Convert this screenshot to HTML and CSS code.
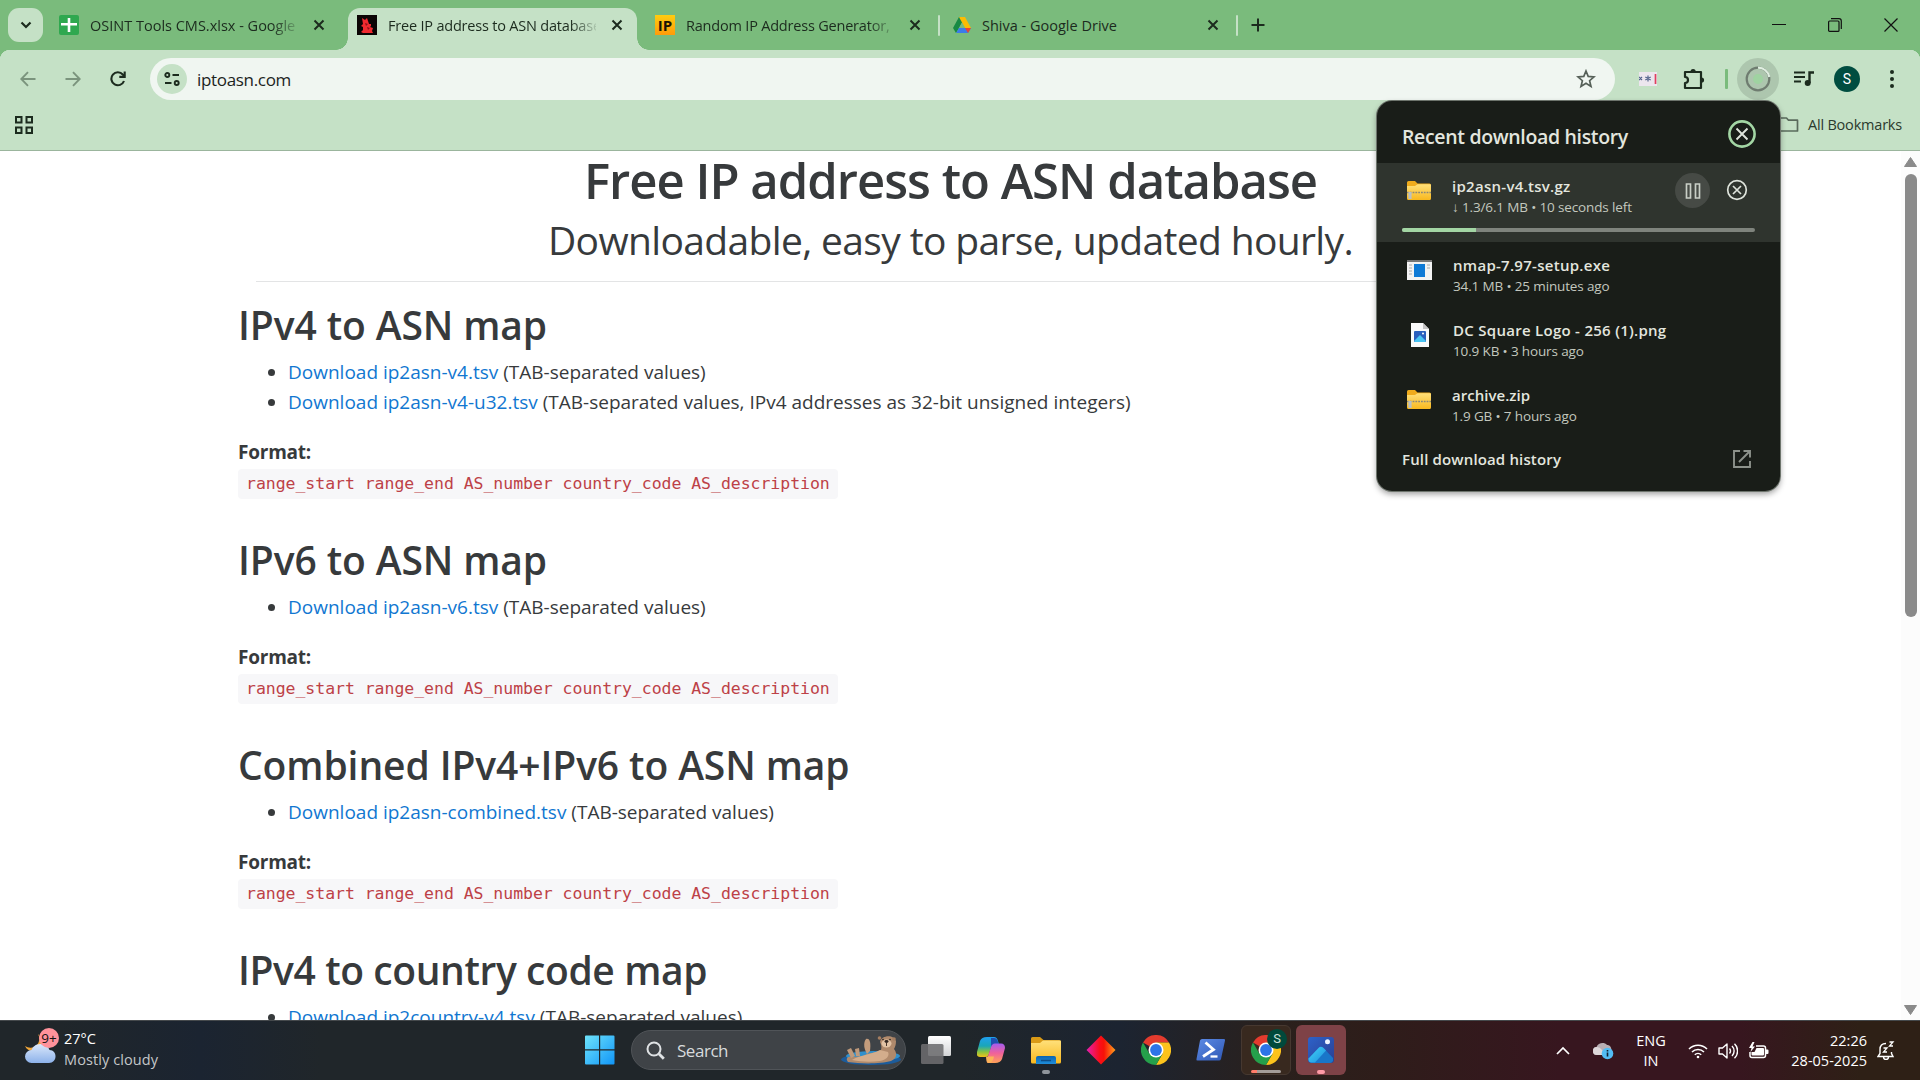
FILE: index.html
```html
<!DOCTYPE html>
<html lang="en">
<head>
<meta charset="utf-8">
<title>Free IP address to ASN database</title>
<link rel="stylesheet" href="styles.css">
</head>
<body>
<svg class="defs" width="0" height="0" aria-hidden="true">
  <defs>
    <linearGradient id="win" gradientUnits="userSpaceOnUse" x1="0" y1="0" x2="30" y2="30"><stop offset="0" stop-color="#6fe4fb"/><stop offset="1" stop-color="#0f94f7"/></linearGradient>
    <linearGradient id="folder" x1="0" y1="0" x2="0" y2="1"><stop offset="0" stop-color="#ffe07a"/><stop offset="1" stop-color="#f8b81e"/></linearGradient>
    <linearGradient id="blueTab" x1="0" y1="0" x2="0" y2="1"><stop offset="0" stop-color="#0b64b0"/><stop offset="1" stop-color="#1f8edb"/></linearGradient>
    <linearGradient id="cloud" x1="0" y1="0" x2="0" y2="1"><stop offset="0" stop-color="#dbe8fb"/><stop offset="1" stop-color="#8db2ea"/></linearGradient>
    <linearGradient id="gem"><stop offset="0" stop-color="#e51fb0"/><stop offset=".45" stop-color="#fb0d1b"/><stop offset=".6" stop-color="#f71208"/><stop offset="1" stop-color="#ffa11c"/></linearGradient>
    <linearGradient id="copA" x1="0" y1="0" x2="0" y2="1"><stop offset="0" stop-color="#1f9ff0"/><stop offset=".45" stop-color="#1aa6b8"/><stop offset=".75" stop-color="#8ac43f"/><stop offset="1" stop-color="#f2c21a"/></linearGradient>
    <linearGradient id="copB" x1="0" y1="0" x2="0" y2="1"><stop offset="0" stop-color="#a35cf0"/><stop offset=".5" stop-color="#f0629a"/><stop offset="1" stop-color="#ffa257"/></linearGradient>
    <linearGradient id="view" x1="0" y1="0" x2="0" y2="1"><stop offset="0" stop-color="#fff"/><stop offset="1" stop-color="#d2d3d5"/></linearGradient>
    <linearGradient id="sky" x1="0" y1="0" x2="1" y2="1"><stop offset="0" stop-color="#2d62c9"/><stop offset="1" stop-color="#2b3f92"/></linearGradient>
    <linearGradient id="hill" x1="0" y1="0" x2="1" y2="1"><stop offset="0" stop-color="#3fd3f6"/><stop offset="1" stop-color="#1f8fdf"/></linearGradient>
    <linearGradient id="ps" x1="0" y1="0" x2="1" y2="1"><stop offset="0" stop-color="#5d8be6"/><stop offset="1" stop-color="#2f58b5"/></linearGradient>
    <symbol id="x" viewBox="0 0 12 12"><path d="M1.500 1.500l9 9M10.500 1.500l-9 9" stroke="#1c2b1e" stroke-width="2" fill="none"/></symbol>
    <symbol id="chrome" viewBox="0 0 30 30">
      <path d="M15 15L2 7.500A15 15 0 0 1 28 7.500H15z" fill="#e33b2e"/>
      <path d="M15 7.500H28A15 15 0 0 1 15 30L21.500 18.700z" fill="#fcc31c"/>
      <path d="M2 7.500A15 15 0 0 0 15 30L21.500 18.700 15 15 8.500 18.700z" fill="#25a04b"/>
      <circle cx="15" cy="15" r="7.500" fill="#fff"/><circle cx="15" cy="15" r="5.900" fill="#2d74e8"/>
    </symbol>
    <symbol id="zip" viewBox="0 0 24 19">
      <path d="M0 1.500Q0 0 1.500 0H8l2.500 2.500H22.500Q24 2.500 24 4V8H0z" fill="#efab1c"/>
      <path d="M0 5h8l2.500-1.800H23q1 0 1 1V17.500q0 1.500-1.500 1.500H1.500Q0 19 0 17.500z" fill="url(#folder)"/>
      <path d="M0 11.500H24" stroke="#8c8877" stroke-width="1.600" stroke-dasharray="1.800 1"/>
      <path d="M3 11v7" stroke="#b9bfc1" stroke-width="3.200"/>
    </symbol>
  </defs>
</svg>

<header class="tabstrip">
  <button class="tab-search"><svg width="12" height="8" viewBox="0 0 12 8"><path d="M1.500 1.500L6 6l4.500-4.500" fill="none" stroke="#1c2b1e" stroke-width="2.200"/></svg></button>
  <div class="tab">
    <svg width="20" height="20"><rect width="20" height="20" rx="2" fill="#2fa84f"/><path d="M8.700 3h2.600v5H18v2.500h-6.700V17H8.700v-6.500H2V8h6.700z" fill="#fff"/></svg>
    <span class="tab-title fade">OSINT Tools CMS.xlsx - Google</span>
    <svg class="x" width="12" height="12"><use href="#x"/></svg>
  </div>
  <div class="tab active">
    <svg width="20" height="20"><rect width="20" height="20" fill="#0c0505"/><path d="M5 3l3 2 2-2 1 3 1 3 2 0 0 2-1 1 3 1-1 3 1 2-10 0-2-1 2-2 0-3-2-1 2-2z" fill="#f02a30"/><path d="M8 8l3 1-2 2zM10 12l3 1-2 2z" fill="#8c1418"/></svg>
    <span class="tab-title fade tight">Free IP address to ASN database</span>
    <svg class="x" width="12" height="12"><use href="#x"/></svg>
  </div>
  <div class="tab sep">
    <span class="ip">IP</span>
    <span class="tab-title fade tight">Random IP Address Generator,</span>
    <svg class="x" width="12" height="12"><use href="#x"/></svg>
  </div>
  <div class="tab sep">
    <svg width="18" height="17" viewBox="0 0 18 17"><path d="M6 0h6L6 11l-3 5L0 11z" fill="#188a44"/><path d="M6 0h6l6 11h-6z" fill="#fbbc04"/><path d="M3.200 16L6 11h12l-3 5z" fill="#3b7bea"/><path d="M12 11h6l-3 5z" fill="#ea4335"/><path d="M9 5.500l3 5.500H6z" fill="#7abb7c"/></svg>
    <span class="tab-title drive">Shiva - Google Drive</span>
    <svg class="x" width="12" height="12"><use href="#x"/></svg>
  </div>
  <svg class="plus" width="14" height="14"><path d="M7 .5v13M.5 7h13" stroke="#1c2b1e" stroke-width="2"/></svg>
  <div class="win-buttons">
    <svg width="14" height="14"><path d="M0 6.500h14" stroke="#111"/></svg>
    <svg width="14" height="14" fill="none" stroke="#111" stroke-width="1.200"><rect x=".6" y="3" width="10.400" height="10.400" rx="1"/><path d="M3 .7h8q2.300 0 2.300 2.300v8"/></svg>
    <svg width="14" height="14"><path d="M.5.5l13 13M13.500.5l-13 13" stroke="#111" stroke-width="1.200"/></svg>
  </div>
</header>

<nav class="toolbar">
  <div class="nav-icons">
    <svg width="16" height="16" fill="none" stroke="#7b947d" stroke-width="1.900"><path d="M15.500 8H1.500M8 1.200L1.300 8 8 14.800"/></svg>
    <svg width="16" height="16" fill="none" stroke="#7b947d" stroke-width="1.900"><path d="M.5 8h14M8 1.200L14.700 8 8 14.800"/></svg>
    <svg width="16" height="16" fill="none" stroke="#1c2b1e" stroke-width="2.100"><path d="M14 10A6.500 6.500 0 1 1 12.800 3.500L14.500 5.500"/><path d="M14.700.5v5.400H9.300"/></svg>
  </div>
  <div class="omnibox">
    <span class="chip"><svg width="16" height="14" fill="none" stroke="#1c2b1e" stroke-width="1.900"><circle cx="3.300" cy="3" r="2"/><path d="M8.500 3H15M1 11h6.500"/><circle cx="12.700" cy="11" r="2"/></svg></span>
    <span class="url">iptoasn.com</span>
    <svg class="star" width="20" height="20" viewBox="0 0 20 20"><path d="M10 2l2.200 5.400 5.800.5-4.400 3.800 1.400 5.700L10 14.300l-5 3.100 1.400-5.700L2 7.900l5.800-.5z" fill="none" stroke="#566058" stroke-width="1.700"/></svg>
  </div>
  <svg class="ext" width="18" height="14"><rect width="18" height="14" fill="#ece6ee"/><path d="M9 3.500v6M6.300 5l5.400 3M11.700 5L6.300 8M0 5l3 3M3 5L0 8" stroke="#53648c" stroke-width="1.200"/><path d="M16.500 2v10" stroke="#e0405e" stroke-width="1.700"/></svg>
  <svg class="puzzle" width="22" height="22"><path d="M2 4H18V20H2v-5a3 3 0 0 0 0-6z" fill="none" stroke="#1c2b1e" stroke-width="2.200" stroke-linejoin="round"/><path d="M7.500 3.500a2.600 2.600 0 0 1 5.200 0zM18.500 9.400a2.600 2.600 0 0 1 0 5.200z" fill="#1c2b1e"/></svg>
  <span class="bar"></span>
  <span class="dl-btn"><svg width="26" height="26" fill="none"><circle cx="13" cy="13" r="5" fill="#9fd3a1"/><circle cx="13" cy="13" r="11.300" stroke="#6f7c70" stroke-width="2.200"/><path d="M13 1.700A11.300 11.300 0 0 1 24.300 11" stroke="#e0efe1" stroke-width="2.200"/></svg></span>
  <svg class="music" width="20" height="16"><path d="M0 1.500h11M0 6h11M0 10.500h7" stroke="#1c2b1e" stroke-width="2.200"/><path d="M15.500 12V1.500H20" fill="none" stroke="#1c2b1e" stroke-width="2.400"/><circle cx="13.700" cy="12" r="3" fill="#1c2b1e"/></svg>
  <span class="avatar">S</span>
  <svg class="dots" width="4" height="18" fill="#1c2b1e"><circle cx="2" cy="2" r="2"/><circle cx="2" cy="9" r="2"/><circle cx="2" cy="16" r="2"/></svg>
</nav>

<div class="bookmarks">
  <svg width="18" height="18" fill="none" stroke="#1c2b1e" stroke-width="2"><path d="M1 1h5.500v5.500H1zM11.500 1H17v5.500h-5.500zM1 11.500h5.500V17H1zM11.500 11.500H17V17h-5.500z"/></svg>
  <span class="all"><svg width="20" height="15" fill="none" stroke="#5a6b5c" stroke-width="1.700"><path d="M1 1h6.500l2 2.200H18.500V14H1z" stroke-linejoin="round"/></svg>All Bookmarks</span>
</div>

<div class="viewport">
  <main class="page">
    <h1>Free IP address to ASN database</h1>
    <p class="lead">Downloadable, easy to parse, updated hourly.</p>
    <hr>
    <section>
      <h2>IPv4 to ASN map</h2>
      <ul>
        <li><a>Download ip2asn-v4.tsv</a> (TAB-separated values)</li>
        <li><a>Download ip2asn-v4-u32.tsv</a> (TAB-separated values, IPv4 addresses as 32-bit unsigned integers)</li>
      </ul>
      <div class="format"><b>Format:</b><code>range_start range_end AS_number country_code AS_description</code></div>
    </section>
    <section>
      <h2>IPv6 to ASN map</h2>
      <ul><li><a>Download ip2asn-v6.tsv</a> (TAB-separated values)</li></ul>
      <div class="format"><b>Format:</b><code>range_start range_end AS_number country_code AS_description</code></div>
    </section>
    <section>
      <h2>Combined IPv4+IPv6 to ASN map</h2>
      <ul><li><a>Download ip2asn-combined.tsv</a> (TAB-separated values)</li></ul>
      <div class="format"><b>Format:</b><code>range_start range_end AS_number country_code AS_description</code></div>
    </section>
    <section>
      <h2 class="narrow">IPv4 to country code map</h2>
      <ul><li><a>Download ip2country-v4.tsv</a> (TAB-separated values)</li></ul>
    </section>
  </main>
  <aside class="scrollbar">
    <svg width="13" height="10"><path d="M6.500.5L12.500 9.500H.5z" fill="#8a8a8a" stroke="#8a8a8a" stroke-linejoin="round"/></svg>
    <span class="thumb"></span>
    <svg width="13" height="10"><path d="M6.500 9.500L12.500.5H.5z" fill="#8a8a8a" stroke="#8a8a8a" stroke-linejoin="round"/></svg>
  </aside>
</div>

<div class="popup">
  <div class="popup-head"><span>Recent download history</span>
    <svg width="28" height="28" fill="none"><circle cx="14" cy="14" r="12.600" stroke="#a3d6a4" stroke-width="2.600"/><path d="M8.500 8.500l11 11M19.500 8.500l-11 11" stroke="#dfe4dc" stroke-width="1.900"/></svg>
  </div>
  <div class="item current">
    <svg class="file" width="24" height="19"><use href="#zip"/></svg>
    <div class="names"><b>ip2asn-v4.tsv.gz</b><small>↓ 1.3/6.1 MB • 10 seconds left</small></div>
    <span class="pause"><svg width="16" height="16" fill="none" stroke="#c9cec6" stroke-width="1.700"><path d="M1.500 1h4v14h-4zM10.500 1h4v14h-4z"/></svg></span>
    <svg class="cancel" width="22" height="22" fill="none" stroke="#dfe4dc" stroke-width="1.700"><circle cx="11" cy="11" r="9.300"/><path d="M7 7l8 8M15 7l-8 8"/></svg>
    <div class="progress"><i></i></div>
  </div>
  <div class="item">
    <svg class="file" width="25" height="20"><rect width="25" height="20" fill="#f3f3f3"/><rect width="25" height="2" fill="#777"/><path d="M2 5h3M2 8h3M2 11h3M2 14h3M20 5h3M20 8h3" stroke="#aaa"/><rect x="7" y="4" width="11" height="13" fill="#0f7ad6"/></svg>
    <div class="names"><b>nmap-7.97-setup.exe</b><small>34.1 MB • 25 minutes ago</small></div>
  </div>
  <div class="item">
    <svg class="file page-file" width="18" height="24"><path d="M0 0h12l6 6v18H0z" fill="#fafafa"/><path d="M12 0l6 6h-6z" fill="#c4c4c4"/><rect x="3" y="8" width="12" height="11" rx="1" fill="#2a5fbe"/><path d="M3 18l6-6 6 6-1 1H4z" fill="#49c4f2"/><circle cx="12" cy="10.500" r="1" fill="#fff"/></svg>
    <div class="names"><b>DC Square Logo - 256 (1).png</b><small>10.9 KB • 3 hours ago</small></div>
  </div>
  <div class="item">
    <svg class="file" width="24" height="19"><use href="#zip"/></svg>
    <div class="names"><b class="zip-name">archive.zip</b><small>1.9 GB • 7 hours ago</small></div>
  </div>
  <div class="popup-foot"><b>Full download history</b>
    <svg width="20" height="20" fill="none" stroke="#8d928b" stroke-width="1.900"><path d="M8 2H2v16h16v-6M11.500 2H18v6.500M18 2L7 13"/></svg>
  </div>
</div>

<footer class="taskbar">
  <div class="weather">
    <svg width="36" height="38" viewBox="0 0 36 38"><path d="M14 6a9 9 0 0 1-13 12c3 7 14 7 16-2 .700-4-.5-8-3-10z" fill="#f3a83a"/><path d="M7.500 35a6.500 6.500 0 0 1 0-13c1-3 4-6 9-6s8 3 9 6c4 0 6 3 6 6.500S29 35 25 35z" fill="url(#cloud)"/><circle cx="25" cy="10" r="10" fill="#ff929b"/><text x="25" y="15" text-anchor="middle" class="badge-text">9+</text></svg>
    <div class="weather-text"><span>27°C</span><span class="dim">Mostly cloudy</span></div>
  </div>
  <div class="apps">
    <span class="app"><svg width="30" height="30" fill="url(#win)"><path d="M0 1.500Q0 .5 1 .5H14v13.800H0zM15.200.5H28.500q1 0 1 1V14.300H15.200zM0 15.500H14V29.500H1q-1 0-1-1zM15.200 15.500H29.500V28.500q0 1-1 1H15.200z"/></svg></span>
    <div class="search">
      <svg width="19" height="19" fill="none" stroke="#dfe2e4" stroke-width="2"><circle cx="8" cy="8" r="6.500"/><path d="M12.800 12.800l5 5" stroke-width="2.800"/></svg>
      <span>Search</span>
      <svg class="otter" width="62" height="32" viewBox="0 0 62 32">
        <ellipse cx="31" cy="25.500" rx="30" ry="5.500" fill="#1c5c9c"/><ellipse cx="33" cy="22" rx="27" ry="5" fill="#3090cc"/>
        <path d="M8 28c-3-4 0-6 5-5l10-1c6-4 14-3 18-6 1-3 0-6-1-8 1-7 14-8 16-1 0 4-1 6-2 8 4 5 2 10-3 12-10 3-30 3-43 1z" fill="#b08a6c"/>
        <path d="M12 26c8-5 18-5 28-10l8 2c2 4-2 8-8 9-9 1-18 1-28-1z" fill="#d3ad8c"/>
        <path d="M27 20c-3-5-4-11-1-15 4-1 5 4 4 12z" fill="#c39c7c"/><path d="M11 24l-4-8 4-2 4 8M16 22l-1-7 4-1 1 8" fill="#c09a7b"/>
        <circle cx="39.500" cy="4" r="1.800" fill="#a57e61"/><circle cx="54" cy="5" r="1.800" fill="#a57e61"/>
        <ellipse cx="46.500" cy="9.500" rx="5" ry="4" fill="#e2c3a5"/><ellipse cx="46.500" cy="7.500" rx="2" ry="1.400" fill="#332620"/><circle cx="43" cy="5.500" r=".8" fill="#222"/><circle cx="50" cy="5.500" r=".8" fill="#222"/><path d="M46.500 9v3" stroke="#4a3429"/>
      </svg>
    </div>
    <span class="app"><svg width="30" height="28"><rect x="7" width="23" height="20" rx="1.500" fill="url(#view)"/><rect y="8" width="22.500" height="20" rx="1.500" fill="#6d6d6f" opacity=".88"/></svg></span>
    <span class="app"><svg width="28" height="26" viewBox="0 0 28 26"><path d="M10 0h7q3 0 4 4l.8 2.500H18q-3 0-4 4l-2 6.500q-1 3-4 3H3q-4 0-3-5l3-11q1.500-4 7-4z" fill="url(#copA)"/><path d="M14 1h3q3 0 4 4l.8 2H17q-2 0-3 3z" fill="#1f4fb0"/><path d="M18 26h-7q-2 0-1-4l4-12q1-3.500 4-3.500h6q4 0 4 4.500l-3 11q-1.500 4-7 4z" fill="url(#copB)"/><path d="M9 19.500h8q-1 6-5 6.500-3 0-3-6.500z" fill="#fdb35a"/></svg></span>
    <span class="app"><svg width="30" height="28"><path d="M0 2.500Q0 1 1.500 1H9l3.500 3H28q2 0 2 2v5H0z" fill="#d99a16"/><path d="M0 7h9l3-2.500h17q1 0 1 1V26q0 1.500-1.500 1.500h-27Q0 27.500 0 26z" fill="url(#folder)"/><path d="M5 28v-6q0-2 2-2h16q2 0 2 2v6z" fill="url(#blueTab)"/><path d="M10 24.500h10" stroke="#0d4d87" stroke-width="1.500"/></svg><i class="run"></i></span>
    <span class="app"><svg width="30" height="30"><path d="M15 .5L29.500 15 15 29.500.5 15z" fill="url(#gem)"/></svg></span>
    <span class="app"><svg width="30" height="30"><use href="#chrome"/></svg></span>
    <span class="app"><svg width="30" height="24"><path d="M6 1h22q1.500 0 1 1.500L25 21q-.5 1.500-2 1.500H1.500q-1.500 0-1-1.500L4 2.500Q4.500 1 6 1z" fill="url(#ps)"/><path d="M9.500 4.500l8 7L7 18.500" fill="none" stroke="#fff" stroke-width="2.800"/><path d="M14.500 18.500h7" stroke="#fff" stroke-width="2.300"/></svg></span>
    <span class="app tile"><svg width="30" height="30"><use href="#chrome"/></svg><em>S</em><i class="under"></i></span>
    <span class="app photos"><svg width="26" height="26"><rect width="26" height="26" rx="3" fill="url(#sky)"/><path d="M1 22L11 11.500q2.500-2.500 5 0L25 21v3q-1 2-3 2H4q-3 0-3-4z" fill="#1976c9"/><path d="M.5 21.500L10.500 11q2-2 4.500-.5l3 3L7 25.500H3q-3-.5-2.500-4z" fill="url(#hill)"/><circle cx="19.500" cy="4.700" r="2.500" fill="#eef5ff"/></svg><i class="run pink"></i></span>
  </div>
  <div class="tray">
    <svg class="chev" width="14" height="9"><path d="M1 8l6-6 6 6" fill="none" stroke="#fff" stroke-width="1.700"/></svg>
    <svg width="21" height="18"><path d="M4 13a4 4 0 0 1-.5-8C5 1 11-.5 14 3c4 0 5 4 4 7l-3 3z" fill="#b8aeb3"/><path d="M4 13a4 4 0 0 1 0-8q3 0 5 3l4 5z" fill="#dcd7d9"/><circle cx="14.500" cy="11.500" r="5.800" fill="#52bdf5"/><path d="M14.500 10.500v4M14.500 8v1.500" stroke="#123" stroke-width="1.600"/></svg>
    <div class="lang"><span>ENG</span><span>IN</span></div>
    <svg width="20" height="16" fill="none" stroke="#fff" stroke-width="1.600"><path d="M1 6a12.700 12.700 0 0 1 18 0M4 9a8.500 8.500 0 0 1 12 0M6.800 11.800a4.600 4.600 0 0 1 6.400 0"/><circle cx="10" cy="14" r="1.300" fill="#fff" stroke="none"/></svg>
    <svg width="20" height="18" fill="none" stroke="#fff" stroke-width="1.400"><path d="M1 6h3.500L9 2v14l-4.500-4H1z" stroke-linejoin="round"/><path d="M11.500 6.500a4 4 0 0 1 0 5M14 4a7 7 0 0 1 0 10M16.500 1.800a10 10 0 0 1 0 14.400"/></svg>
    <svg width="21" height="18"><path d="M8 4h7.500q2 0 2 2v7.500q0 2-2 2H4q-2 0-2-2V10" fill="none" stroke="#fff" stroke-width="1.500"/><path d="M8.500 6h6.500q1 0 1 1v5.500q0 1-1 1H4.500q-1 0-1-1V10h3z" fill="#fff"/><path d="M18 7.500h1.500q1 0 1 1v2.500q0 1-1 1H18zM4.500 0L1 6h2.500L2.500 10 7 4.500H4.500L6.500 0z" fill="#fff"/></svg>
    <div class="clock"><span>22:26</span><span>28-05-2025</span></div>
    <svg width="18" height="19" fill="none" stroke="#fff" stroke-width="1.400"><path d="M9 2.500Q3 2.500 3 8.500v4L1 15.500h15l-1.500-3V11M6.500 16a2.500 2.500 0 0 0 5 0"/><path d="M6.500 7h3.500l-3.500 4H10M12.500 1H16l-3.500 4H16" stroke-width="1.300"/></svg>
  </div>
</footer>
</body>
</html>
```
FILE: styles.css
```css
* { box-sizing: border-box; }
body {
  margin: 0; width: 1920px; height: 1080px; overflow: hidden;
  display: flex; flex-direction: column; background: #fff;
  font-family: "Open Sans", "Noto Sans", sans-serif; color: #373a3c;
}
svg { display: block; flex: none; }
.defs { position: absolute; }
button { border: 0; padding: 0; }

/* tab strip */
.tabstrip { height: 50px; flex: none; background: #7abb7c; display: flex; align-items: center; padding-left: 8px; color: #1c2b1e; }
.tab-search { width: 35px; height: 34px; margin-right: 7px; border-radius: 11px; background: #c5e1c6; display: grid; place-items: center; }
.tab { width: 298px; height: 42px; margin-top: 8px; padding: 0 0 8px 9px; display: flex; align-items: center; position: relative; flex: none; }
.tab-title { width: 208px; margin-left: 11px; font-size: 14.500px; white-space: nowrap; overflow: hidden; }
.tight { letter-spacing: -.2px; }
.fade { -webkit-mask-image: linear-gradient(90deg, #000 182px, transparent 212px); mask-image: linear-gradient(90deg, #000 182px, transparent 212px); }
.x { margin-left: 15px; }
.drive { margin-left: 11px; width: 210px; }
.sep::after { content: ""; width: 2px; height: 21px; margin-left: 17px; background: #c5e1c6; border-radius: 1px; }
.active { width: 289px; margin-right: 9px; background: #c5e1c6; border-radius: 12px 12px 0 0; }
.active::before, .active::after { content: ""; position: absolute; bottom: 0; width: 12px; height: 12px; }
.active::before { left: -12px; background: radial-gradient(circle at 0 0, transparent 11.500px, #c5e1c6 12px); }
.active::after { right: -12px; background: radial-gradient(circle at 100% 0, transparent 11.500px, #c5e1c6 12px); }
.ip { width: 20px; height: 20px; background: linear-gradient(#ffcc10, #ff9b0a); color: #1b1405; font-weight: 700; font-size: 15px; line-height: 20px; text-align: center; }
.plus { margin-left: 9px; }
.win-buttons { margin-left: auto; display: flex; gap: 42px; padding-right: 22px; }

/* toolbar */
.toolbar { height: 50px; flex: none; background: #c5e1c6; display: flex; align-items: center; padding: 8px 0 0; border-radius: 10px 10px 0 0; box-shadow: 0 -10px 0 0 #7abb7c; position: relative; clip-path: inset(0); background: radial-gradient(circle at 10px 10px, #c5e1c6 10px, #7abb7c 10.500px) 0 0 / 10px 10px no-repeat, radial-gradient(circle at 0 10px, #c5e1c6 10px, #7abb7c 10.500px) 100% 0 / 10px 10px no-repeat, #c5e1c6; border-radius: 0; box-shadow: none; }
.nav-icons { width: 150px; display: flex; gap: 29px; padding-left: 20px; }
.omnibox { width: 1465px; height: 42px; border-radius: 21px; background: #f0f6f1; display: flex; align-items: center; padding-left: 7px; flex: none; }
.chip { width: 30px; height: 30px; border-radius: 50%; background: #c5e1c6; display: grid; place-items: center; }
.url { margin-left: 10px; font-size: 17px; letter-spacing: -.32px; color: #1c241d; }
.star { margin-left: auto; margin-right: 19px; }
.ext { margin-left: 24px; }
.puzzle { margin-left: 26px; }
.bar { width: 3px; height: 20px; margin-left: 20px; background: #7abb7c; border-radius: 1px; }
.dl-btn { width: 42px; height: 42px; margin-left: 9px; border-radius: 50%; background: #adc6ae; display: grid; place-items: center; }
.music { margin-left: 15px; }
.avatar { width: 26px; height: 26px; margin-left: 20px; border-radius: 50%; background: #004d40; color: #fff; font: 14px/26px Roboto, sans-serif; text-align: center; }
.dots { margin-left: 30px; }
.bookmarks { height: 51px; flex: none; background: #c5e1c6; border-bottom: 1px solid #9bb59d; display: flex; justify-content: space-between; align-items: center; padding: 0 18px 0 15px; font-size: 14.500px; color: #2b3a2d; }
.all { display: flex; align-items: center; gap: 9px; letter-spacing: -.2px; padding-bottom: 2px; }

/* page */
.viewport { height: 869px; flex: none; display: flex; overflow: hidden; }
.page { width: 1901px; padding: 0 238px; }
h1 { margin: 0; font-size: 49px; line-height: 59px; font-weight: 600; text-align: center; letter-spacing: -.99px; }
.lead { margin: 0; font-size: 39px; line-height: 59px; text-align: center; letter-spacing: -.65px; }
hr { border: 0; height: 1px; background: #e3e4e5; margin: 12px 18px 19px; }
section { margin-bottom: 37px; }
h2 { margin: 0 0 8px; font-size: 39px; line-height: 48px; font-weight: 600; letter-spacing: -.1px; }
.narrow { letter-spacing: -.4px; }
ul { margin: 0 0 20px; padding-left: 50px; font-size: 19px; line-height: 30px; }
a { color: #1177d1; }
.format { display: flex; flex-direction: column; align-items: flex-start; font-size: 19px; line-height: 30px; gap: 2px; }
.format b { font-weight: 700; letter-spacing: -.23px; }
code { padding: 0 8px; background: #f7f7f9; border-radius: 4px; color: #bd4147; font: 16.500px/30px "DejaVu Sans Mono", monospace; letter-spacing: -.04px; }
.scrollbar { width: 19px; background: #fcfcfc; display: flex; flex-direction: column; align-items: center; padding: 6px 0 5px; }
.thumb { width: 12px; height: 443px; margin: 7px 0 auto; border-radius: 6px; background: #8a8a8a; }

/* downloads popup */
.popup { position: absolute; left: 1377px; top: 101px; width: 403px; height: 390px; background: #191d18; border-radius: 15px; box-shadow: 0 0 0 1px #6d746c, 0 3px 6px rgba(0,0,0,.4); color: #e3e6df; overflow: hidden; }
.popup-head { height: 62px; padding: 4px 24px 0 25px; display: flex; align-items: center; justify-content: space-between; font-size: 19.500px; font-weight: 600; letter-spacing: -.34px; }
.popup-head span { padding-top: 5px; }
.item { height: 65px; padding: 12px 24px 0 30px; display: flex; flex-wrap: wrap; align-content: flex-start; align-items: flex-start; }
.item .file { margin-top: 5px; margin-right: 21px; }
.item .page-file { margin: 3px 24px 0 4px; }
.names { width: 223px; display: flex; flex-direction: column; white-space: nowrap; }
.names b { font-size: 15px; line-height: 21px; font-weight: 600; letter-spacing: .28px; }
.names .zip-name { letter-spacing: .03px; }
.names small { font-size: 13.500px; line-height: 21px; color: #c3c8bf; letter-spacing: -.14px; }
.current { height: 79px; background: #2f342e; padding-top: 13px; margin-bottom: 1px; }
.pause { width: 35px; height: 35px; margin-top: -3px; border-radius: 50%; background: #464a45; display: grid; place-items: center; }
.cancel { margin: 3px 0 0 16px; }
.progress { width: 353px; height: 4px; margin: 10px 0 0 -5px; border-radius: 2px; background: #7f847d; overflow: hidden; }
.progress i { display: block; width: 74px; height: 4px; background: #a3d6a4; }
.popup-foot { height: 40px; padding: 2px 28px 0 25px; display: flex; align-items: center; justify-content: space-between; font-size: 15px; letter-spacing: .15px; }
.popup-foot b { font-weight: 600; }

/* taskbar */
.taskbar { height: 60px; flex: none; border-top: 1px solid #45494c; display: flex; color: #fff;
  background: linear-gradient(90deg, #20262a 0, #20262a 60px, #1b2431 200px, #20262a 320px, #20262a 960px, #1c2431 1120px, #2a201c 1280px, #2e1d1a 1380px, #37161f 1560px, #37161f 1740px, #2e2016 1860px, #2e2016 1920px); }
.weather { width: 575px; display: flex; padding: 7px 0 0 24px; }
.badge-text { font-size: 13.500px; fill: #111; }
.weather-text { display: flex; flex-direction: column; margin-left: 4px; font-size: 14.500px; line-height: 21px; }
.dim { color: #c4c7c9; letter-spacing: .09px; }
.apps { display: flex; gap: 5px; padding-top: 4px; }
.app { width: 50px; height: 50px; border-radius: 6px; display: grid; place-items: center; position: relative; }
.search { width: 275px; height: 40px; margin: 5px 0 0 1px; border-radius: 20px; background: #3f4347; border: 1px solid #505458; display: flex; align-items: center; padding: 0 3px 0 14px; font-size: 17px; letter-spacing: -.47px; color: #d8dbdd; }
.search span { margin-left: 12px; }
.otter { margin-left: auto; }
.run { position: absolute; bottom: 1px; left: 21px; width: 8px; height: 4px; border-radius: 2px; background: #8f959b; }
.pink { background: #ff9aa6; }
.tile { background: #38291f; border: 1px solid #463830; }
.tile em { position: absolute; left: 25px; top: 3px; width: 20px; height: 20px; border-radius: 50%; background: #00493b; color: #cfe0da; font: 13px/20px Roboto, sans-serif; text-align: center; }
.under { position: absolute; left: 9px; bottom: 1px; width: 30px; height: 3px; border-radius: 2px; background: linear-gradient(90deg, #ff7d6b 6px, #a49d99 6px); }
.photos { background: #7e4247; }
.tray { margin-left: auto; display: flex; align-items: center; padding-right: 25px; font-size: 14.500px; line-height: 20px; gap: 10px; }
.lang { display: flex; flex-direction: column; align-items: center; width: 42px; margin: 0 6px 0 6px; }
.chev { margin-right: 13px; }
.clock { width: 88px; display: flex; flex-direction: column; align-items: flex-end; }
```
